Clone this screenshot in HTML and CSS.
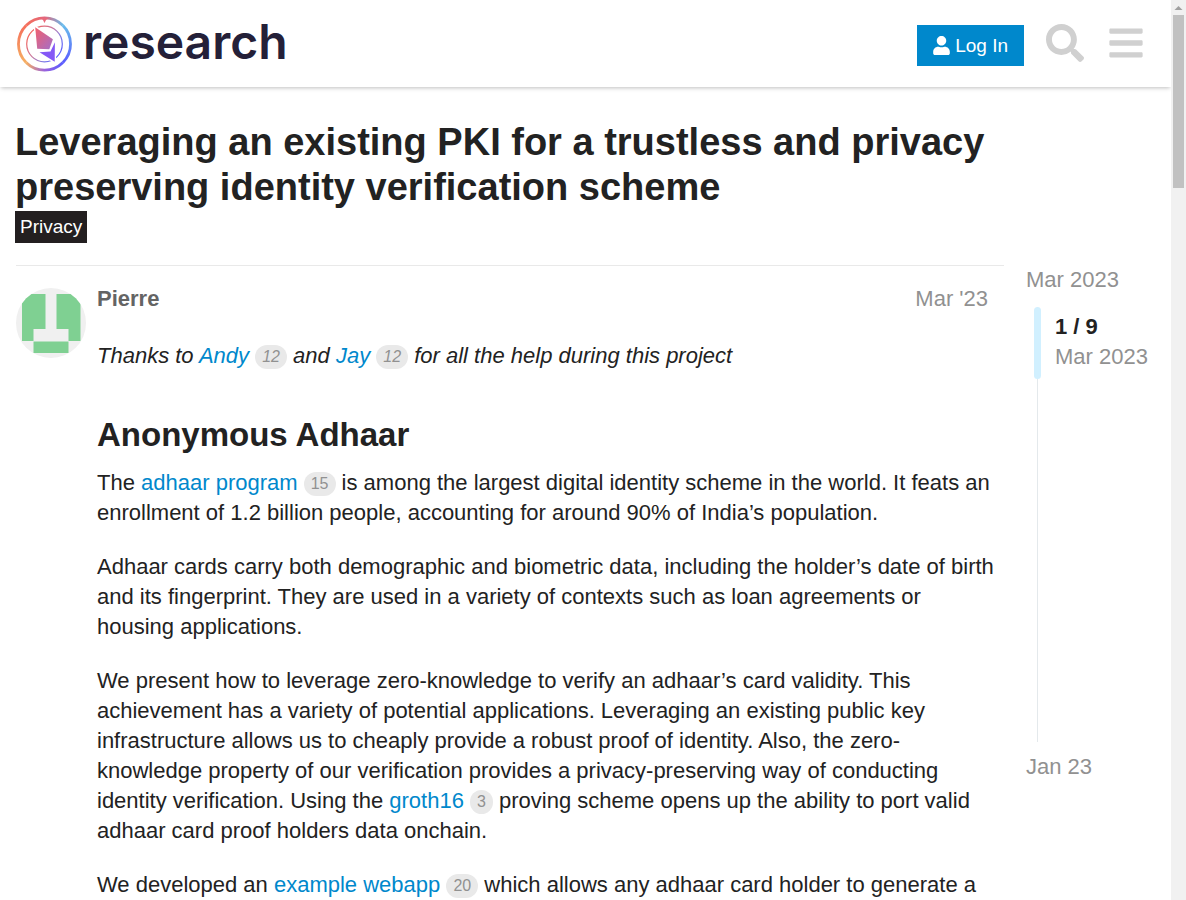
FILE: index.html
```html
<!DOCTYPE html>
<html lang="en">
<head>
<meta charset="utf-8">
<title>Leveraging an existing PKI for a trustless and privacy preserving identity verification scheme</title>
<link rel="stylesheet" href="styles.css">
</head>
<body>
<div class="page">
  <header class="site-header">
    <a class="logo" href="#">
      <svg class="logo-mark" viewBox="0 0 56 56" aria-hidden="true">
        <defs>
          <linearGradient id="ring" x1="0.1" y1="0.2" x2="0.95" y2="0.8">
            <stop offset="0" stop-color="#f2665f"/>
            <stop offset="0.4" stop-color="#c8789e"/>
            <stop offset="0.75" stop-color="#7a7be8"/>
            <stop offset="1" stop-color="#5a5cff"/>
          </linearGradient>
          <linearGradient id="gem" x1="0" y1="0" x2="1" y2="1">
            <stop offset="0" stop-color="#f4606c"/>
            <stop offset="1" stop-color="#a36fc9"/>
          </linearGradient>
          <linearGradient id="top" x1="0" y1="0" x2="1" y2="0">
            <stop offset="0" stop-color="#f5705c"/><stop offset="0.5" stop-color="#e2667c"/><stop offset="1" stop-color="#68bbec"/>
          </linearGradient>
          <linearGradient id="bottom" x1="0" y1="0" x2="1" y2="0">
            <stop offset="0" stop-color="#f6ae62"/><stop offset="0.5" stop-color="#9a62dc"/><stop offset="1" stop-color="#5a5cff"/>
          </linearGradient>
          <linearGradient id="right" x1="0" y1="0" x2="0" y2="1">
            <stop offset="0" stop-color="#68bbec"/><stop offset="1" stop-color="#5a5cff"/>
          </linearGradient>
          <linearGradient id="left" x1="0" y1="0" x2="0" y2="1">
            <stop offset="0" stop-color="#f5705c"/><stop offset="1" stop-color="#f6ae62"/>
          </linearGradient>
        </defs>
        <circle cx="28.500" cy="28" r="17.800" fill="none" stroke="url(#ring)" stroke-width="1.200"/>
        <g fill="#fff" stroke="#fff" stroke-width="3" stroke-linejoin="round">
          <path d="M19.300 11.300L36.700 23.300L33.300 33.300L21.200 32.500Z"/>
          <path d="M24.700 36.500L34.500 34.700L38.700 26.300L38.500 45.700Z"/>
        </g>
        <path d="M19.200 11.200L36.900 23.300L33.300 33.300L21.200 32.700Z" fill="url(#gem)"/>
        <path d="M23.500 36.300L34.500 35.500L38.900 26.300L38.700 45.800Z" fill="#8558f6"/>
        <g fill="none" stroke-width="2.800">
          <path d="M10.100 9.600A26 26 0 0 1 46.900 9.600" stroke="url(#top)"/>
          <path d="M46.900 9.600A26 26 0 0 1 46.900 46.400" stroke="url(#right)"/>
          <path d="M46.900 46.400A26 26 0 0 1 10.100 46.400" stroke="url(#bottom)"/>
          <path d="M10.100 46.400A26 26 0 0 1 10.100 9.600" stroke="url(#left)"/>
        </g>
        <path d="M24.500 2L27 4L28.500 7L30 4L32.500 2Z" fill="#e9687a"/>
      </svg>
      <span class="logo-text">research</span>
    </a>
    <div class="header-actions">
      <button class="login" type="button">
        <svg class="user-icon" viewBox="0 0 448 512" aria-hidden="true"><path fill="currentColor" d="M224 256c70.700 0 128-57.300 128-128S294.700 0 224 0 96 57.300 96 128s57.300 128 128 128zm89.600 32h-16.700c-22.200 10.200-46.900 16-72.900 16s-50.600-5.800-72.900-16h-16.700C60.200 288 0 348.200 0 422.400V464c0 26.500 21.500 48 48 48h352c26.500 0 48-21.500 48-48v-41.600c0-74.200-60.200-134.400-134.400-134.400z"/></svg>
        <span>Log In</span>
      </button>
      <button class="icon-button" type="button" aria-label="Search">
        <svg class="search-icon" viewBox="0 0 512 512" aria-hidden="true"><path fill="currentColor" d="M505 442.700L405.300 343c-4.500-4.500-10.600-7-17-7H372c27.600-35.300 44-79.700 44-128C416 93.100 322.900 0 208 0S0 93.100 0 208s93.100 208 208 208c48.300 0 92.700-16.400 128-44v16.300c0 6.400 2.500 12.500 7 17l99.700 99.700c9.400 9.400 24.600 9.400 33.900 0l28.300-28.300c9.400-9.400 9.400-24.600.1-34zM208 336c-70.700 0-128-57.200-128-128 0-70.700 57.200-128 128-128 70.700 0 128 57.200 128 128 0 70.700-57.200 128-128 128z"/></svg>
      </button>
      <button class="icon-button" type="button" aria-label="Menu">
        <svg class="menu-icon" viewBox="0 0 448 512" aria-hidden="true"><path fill="currentColor" d="M16 132h416c8.800 0 16-7.200 16-16V76c0-8.800-7.200-16-16-16H16C7.200 60 0 67.200 0 76v40c0 8.800 7.200 16 16 16zm0 160h416c8.800 0 16-7.200 16-16v-40c0-8.800-7.200-16-16-16H16c-8.800 0-16 7.200-16 16v40c0 8.800 7.200 16 16 16zm0 160h416c8.800 0 16-7.200 16-16v-40c0-8.800-7.200-16-16-16H16c-8.800 0-16 7.200-16 16v40c0 8.800 7.200 16 16 16z"/></svg>
      </button>
    </div>
  </header>
  <main class="topic">
    <h1 class="title">Leveraging an existing PKI for a trustless and privacy preserving identity verification scheme</h1>
    <a class="category" href="#">Privacy</a>
    <div class="columns">
      <article class="post">
        <svg class="avatar" viewBox="0 0 70 70" role="img" aria-label="Pierre">
          <clipPath id="round"><circle cx="35" cy="35" r="35"/></clipPath>
          <g clip-path="url(#round)">
            <rect width="70" height="70" fill="#f0f0f0"/>
            <path fill="#7fd092" d="M14 6H29.500v35H17.500v12H6V15Q9 9 14 6zM40.500 6H56Q61 9 64.500 15V53H52.500V41h-12zM17.500 53.500H52.500v11.500h-35z"/>
          </g>
        </svg>
        <div class="post-body">
          <div class="post-meta">
            <a class="author" href="#">Pierre</a>
            <a class="post-date" href="#">Mar '23</a>
          </div>
          <div class="cooked">
            <p><em>Thanks to <a href="#">Andy</a> <span class="clicks">12</span> and <a href="#">Jay</a> <span class="clicks">12</span> for all the help during this project</em></p>
            <h2>Anonymous Adhaar</h2>
            <p>The <a href="#">adhaar program</a> <span class="clicks">15</span> is among the largest digital identity scheme in the world. It feats an enrollment of 1.2 billion people, accounting for around 90% of India’s population.</p>
            <p>Adhaar cards carry both demographic and biometric data, including the holder’s date of birth and its fingerprint. They are used in a variety of contexts such as loan agreements or housing applications.</p>
            <p>We present how to leverage zero-knowledge to verify an adhaar’s card validity. This achievement has a variety of potential applications. Leveraging an existing public key infrastructure allows us to cheaply provide a robust proof of identity. Also, the zero-knowledge property of our verification provides a privacy-preserving way of conducting identity verification. Using the <a href="#">groth16</a> <span class="clicks">3</span> proving scheme opens up the ability to port valid adhaar card proof holders data onchain.</p>
            <p>We developed an <a href="#">example webapp</a> <span class="clicks">20</span> which allows any adhaar card holder to generate a</p>
          </div>
        </div>
      </article>
      <nav class="timeline" aria-label="Topic timeline">
        <a class="timeline-date" href="#">Mar 2023</a>
        <div class="track">
          <div class="handle"></div>
          <div class="position"><strong>1 / 9</strong><span>Mar 2023</span></div>
        </div>
        <a class="timeline-date" href="#">Jan 23</a>
      </nav>
    </div>
  </main>
</div>
<div class="scrollbar" aria-hidden="true">
  <svg class="scroll-arrow" viewBox="0 0 15 15"><path d="M3.500 10L7.500 6L11.500 10Z" fill="#a0a0a0"/></svg>
  <div class="thumb"></div>
</div>
</body>
</html>
```

FILE: styles.css
```css
* { box-sizing: border-box; }
body {
  margin: 0;
  display: flex;
  height: 100vh;
  overflow: hidden;
  background: #fff;
  color: #222;
  font: 22px/30px "Liberation Sans", Arial, sans-serif;
}
a { color: #0088cc; text-decoration: none; }
button { font: inherit; border: 0; cursor: pointer; }
.page { flex: 1; min-width: 0; overflow: hidden; }

.site-header {
  display: flex;
  align-items: center;
  justify-content: space-between;
  height: 87px;
  padding: 0 24px 0 16px;
  box-shadow: 0 2px 4px -1px rgba(0, 0, 0, 0.25);
}
.logo { display: flex; align-items: center; gap: 11px; }
.logo-mark { width: 56px; height: 56px; }
.logo-text {
  padding-bottom: 4px;
  color: #242038;
  font: 600 48px/52px Inter, sans-serif;
}
.header-actions { display: flex; align-items: center; }
.login {
  display: flex;
  align-items: center;
  gap: 5px;
  height: 41px;
  margin: 4px 18px 0 0;
  padding: 0 16px;
  background: #0088cc;
  color: #fff;
  font-size: 19px;
}
.user-icon { width: 17px; height: 19px; }
.icon-button {
  display: flex;
  padding: 0 4px 2px;
  background: none;
  color: #d0d0d0;
}
.icon-button + .icon-button { margin-left: 17px; }
.search-icon { width: 38px; height: 38px; }
.menu-icon { width: 34px; height: 38px; }

.topic { padding: 33px 15px 0; }
.title {
  margin: 0;
  max-width: 1000px;
  font-size: 38px;
  line-height: 45px;
}
.category {
  display: table;
  margin-top: 1px;
  padding: 0 5px;
  background: #231f20;
  color: #fff;
  font-size: 19px;
  line-height: 32px;
}
.columns { display: flex; gap: 22px; margin-top: 22px; }
.post {
  display: flex;
  flex: 1;
  min-width: 0;
  gap: 11px;
  margin-left: 1px;
  padding-top: 18px;
  border-top: 1px solid #e9e9e9;
}
.avatar { flex: none; width: 70px; height: 70px; margin-top: 4px; }
.post-body { flex: 1; min-width: 0; }
.post-meta { display: flex; justify-content: space-between; padding-right: 16px; }
.author { color: #646464; font-weight: bold; }
.post-date, .timeline-date { color: #919191; }
.cooked { padding: 27px 6px 0 0; }
.cooked p { margin: 0 0 24px; }
.cooked h2 { margin: 43px 0 12px; font-size: 33px; line-height: 42px; }
.clicks {
  display: inline-block;
  padding: 0 7px;
  border-radius: 12px;
  background: #e9e9e9;
  color: #919191;
  font-size: 16px;
  line-height: 24px;
  vertical-align: 1px;
}

.timeline { flex: none; width: 130px; }
.timeline-date { display: block; }
.track {
  display: flex;
  gap: 14px;
  height: 435px;
  margin: 12px 0 10px 8px;
  background: linear-gradient(#e4e9ec, #e4e9ec) 3px 0 / 1px 100% no-repeat;
}
.handle { width: 7px; height: 72px; border-radius: 4px; background: #d1f0ff; }
.position { display: flex; flex-direction: column; padding-top: 5px; }
.position span { color: #919191; }

.scrollbar { flex: none; width: 15px; background: #f1f1f1; }
.scroll-arrow { display: block; width: 15px; height: 15px; }
.thumb { height: 173px; margin: 0 2px; background: #c1c1c1; }
```
